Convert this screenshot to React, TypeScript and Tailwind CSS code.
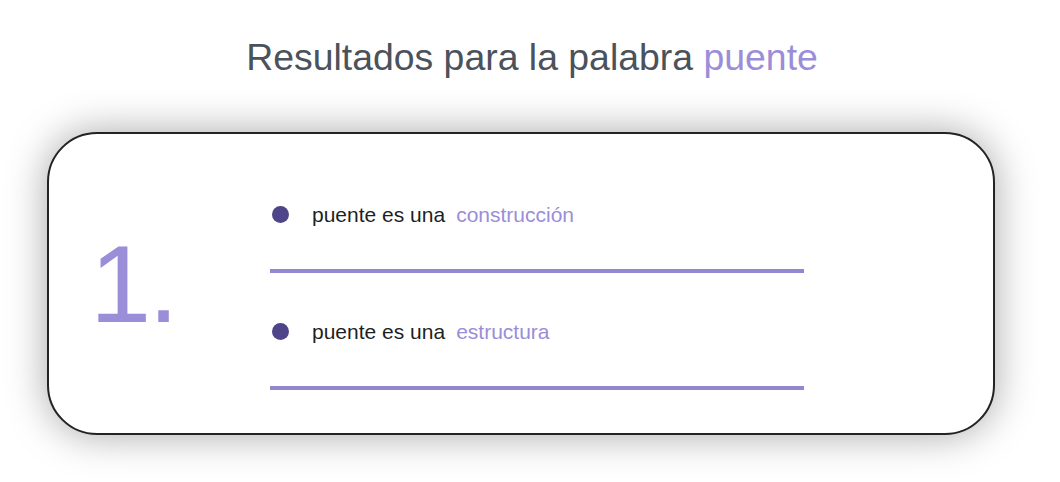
import React from 'react'

const ITEMS = ['construcción', 'estructura']

function ResultRow({ word }: { word: string }) {
  return (
    <div className="flex flex-col">
      <div className="flex h-[30px] items-center">
        <span className="ml-[2px] h-[17px] w-[17px] rounded-full bg-[#4d4489]" />
        <span className="ml-[23px] text-[21px] leading-none text-[#1f1f1f]">puente es una</span>
        <span className="ml-[11px] text-[21px] leading-none text-[#9a8ed8]">{word}</span>
      </div>
      <div className="mt-[40px] h-[4px] w-full bg-[#9487cf]" />
    </div>
  )
}

export default function App() {
  return (
    <div className="min-h-[482px] bg-white pt-[39px] font-[family-name:'Liberation_Sans',Arial,sans-serif]">
      <h1 className="pl-[4px] text-center text-[37.4px] leading-[37px] text-[#4b525b]">
        Resultados para la palabra <span className="text-[#9a8ed8]">puente</span>
      </h1>

      <div className="mt-[56px] ml-[47px] flex h-[303px] w-[948px] rounded-[50px] border-2 border-[#222326] bg-white shadow-[0_0_40px_rgba(0,0,0,0.35)]">
        <div className="flex w-[221px] items-center pl-[41px]">
          <span className="text-[110px] leading-none tracking-[-3px] text-[#9a8ed8]">1.</span>
        </div>
        <div className="flex w-[534px] flex-col gap-[43px] pt-[65px]">
          {ITEMS.map((w) => (
            <ResultRow key={w} word={w} />
          ))}
        </div>
      </div>
    </div>
  )
}
